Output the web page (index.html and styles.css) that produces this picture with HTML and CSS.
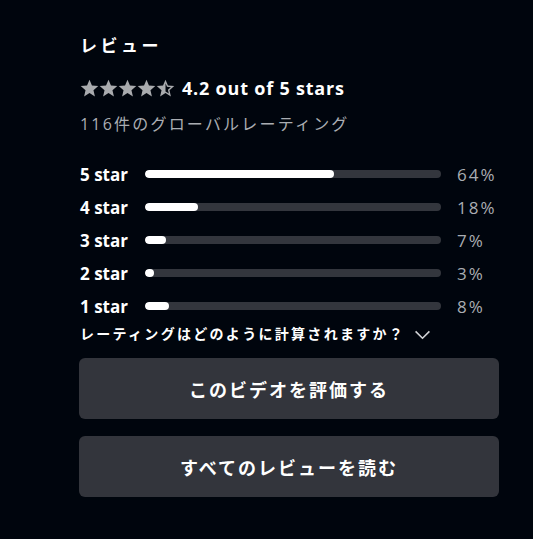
FILE: index.html
```html
<!DOCTYPE html>
<html lang="ja">

<head>
    <meta charset="UTF-8">
    <meta name="viewport" content="width=device-width, initial-scale=1.0">
    <title>レビュー</title>
    <link rel="stylesheet" href="styles.css">
</head>

<body>
    <div class="reviews">
        <h2 class="title">レビュー</h2>

        <div class="summary">
            <div class="stars">
                <svg viewBox="0 0 24 24" class="star"><path d="M12 17.27L18.18 21l-1.64-7.03L22 9.24l-7.19-.61L12 2 9.19 8.63 2 9.24l5.46 4.73L5.82 21z" /></svg>
                <svg viewBox="0 0 24 24" class="star"><path d="M12 17.27L18.18 21l-1.64-7.03L22 9.24l-7.19-.61L12 2 9.19 8.63 2 9.24l5.46 4.73L5.82 21z" /></svg>
                <svg viewBox="0 0 24 24" class="star"><path d="M12 17.27L18.18 21l-1.64-7.03L22 9.24l-7.19-.61L12 2 9.19 8.63 2 9.24l5.46 4.73L5.82 21z" /></svg>
                <svg viewBox="0 0 24 24" class="star"><path d="M12 17.27L18.18 21l-1.64-7.03L22 9.24l-7.19-.61L12 2 9.19 8.63 2 9.24l5.46 4.73L5.82 21z" /></svg>
                <svg viewBox="0 0 24 24" class="star"><path d="M22 9.24l-7.19-.62L12 2 9.19 8.63 2 9.24l5.46 4.73L5.82 21 12 17.27 18.18 21l-1.63-7.03L22 9.24zM12 15.4V6.1l1.71 4.04 4.38.38-3.32 2.88 1 4.28L12 15.4z" /></svg>
            </div>
            <span class="score">4.2 out of 5 stars</span>
        </div>

        <p class="count">116件のグローバルレーティング</p>

        <div class="histogram">
            <div class="row">
                <span class="label">5 star</span>
                <div class="track"><div class="fill" style="width: 64%"></div></div>
                <span class="pct">64%</span>
            </div>
            <div class="row">
                <span class="label">4 star</span>
                <div class="track"><div class="fill" style="width: 18%"></div></div>
                <span class="pct">18%</span>
            </div>
            <div class="row">
                <span class="label">3 star</span>
                <div class="track"><div class="fill" style="width: 7%"></div></div>
                <span class="pct">7%</span>
            </div>
            <div class="row">
                <span class="label">2 star</span>
                <div class="track"><div class="fill" style="width: 3%"></div></div>
                <span class="pct">3%</span>
            </div>
            <div class="row">
                <span class="label">1 star</span>
                <div class="track"><div class="fill" style="width: 8%"></div></div>
                <span class="pct">8%</span>
            </div>
        </div>

        <div class="howto">
            <span>レーティングはどのように計算されますか？</span>
            <svg viewBox="0 0 16 16" class="chevron"><path d="M1.5 5l6.5 6.5 6.5-6.5" /></svg>
        </div>

        <button class="action">このビデオを評価する</button>
        <button class="action">すべてのレビューを読む</button>
    </div>
</body>

</html>
```

FILE: styles.css
```css
:root {
    --bg-color: #00050d;
    --track-color: #33363d;
    --button-color: #33353c;
    --muted-color: #aaadb2;
    --star-color: #a9abae;
}

body {
    font-family: 'Open Sans', 'Noto Sans CJK JP', sans-serif;
    background-color: var(--bg-color);
    color: #ffffff;
    margin: 0;
    padding: 0;
}

.reviews {
    width: 420px;
    margin-left: 79px;
    padding-top: 32px;
}

.title {
    font-size: 17px;
    font-weight: 700;
    line-height: 28px;
    letter-spacing: 3.5px;
    margin: 0 0 14px 1px;
}

.summary {
    display: flex;
    align-items: center;
    height: 28px;
}

.stars {
    display: flex;
    margin-right: 8px;
}

.star {
    width: 21px;
    height: 21px;
    margin-right: -2px;
    fill: var(--star-color);
}

.score {
    font-size: 18px;
    font-weight: 700;
    letter-spacing: 0.8px;
}

.count {
    color: var(--muted-color);
    font-size: 16px;
    line-height: 24px;
    letter-spacing: 2.2px;
    margin: 10px 0 26px 1px;
}

.histogram {
    display: flex;
    flex-direction: column;
    gap: 9px;
}

.row {
    display: flex;
    align-items: center;
    height: 24px;
    margin-left: 1px;
}

.label {
    width: 65px;
    font-size: 17px;
    font-weight: 700;
}

.track {
    width: 296px;
    height: 8px;
    border-radius: 4px;
    background-color: var(--track-color);
    overflow: hidden;
}

.fill {
    height: 100%;
    border-radius: 4px;
    background-color: #ffffff;
}

.pct {
    margin-left: 16px;
    color: var(--muted-color);
    font-size: 17px;
    letter-spacing: 2px;
}

.howto {
    display: flex;
    align-items: center;
    gap: 9px;
    margin: 4px 0 12px 1px;
    font-size: 14px;
    font-weight: 700;
    line-height: 24px;
    letter-spacing: 2.3px;
}

.chevron {
    width: 17px;
    height: 17px;
    fill: none;
    stroke: #d0d2d5;
    stroke-width: 1.5;
}

.action {
    display: block;
    width: 420px;
    height: 61px;
    margin-bottom: 17px;
    border: none;
    border-radius: 6px;
    background-color: var(--button-color);
    color: #ffffff;
    font-family: inherit;
    font-size: 18px;
    font-weight: 700;
    letter-spacing: 2px;
    cursor: pointer;
}
```
